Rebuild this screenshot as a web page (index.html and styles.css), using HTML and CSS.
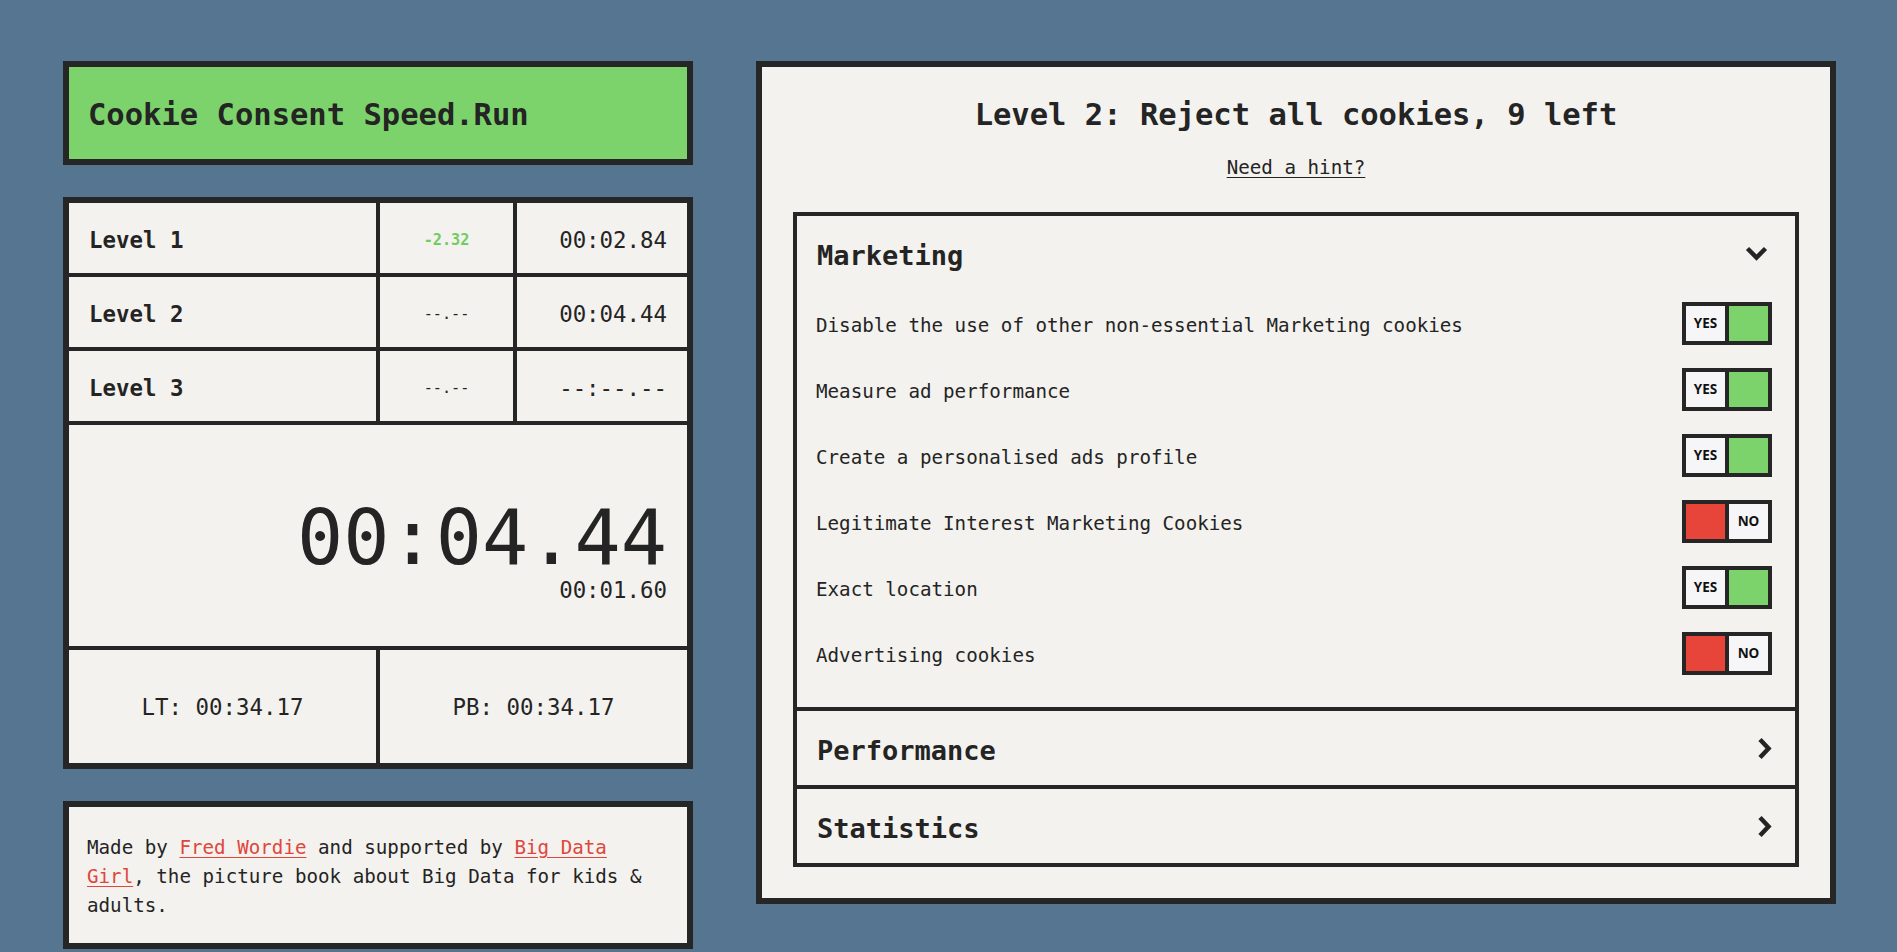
FILE: index.html
```html
<!DOCTYPE html>
<html lang="en">
<head>
  <meta charset="UTF-8">
  <meta name="viewport" content="width=device-width, initial-scale=1.0">
  <title>Cookie Consent Speed.Run</title>
  <link rel="stylesheet" href="styles.css">
</head>
<body>
  <main class="layout">
    <aside class="sidebar">
      <header class="brand">
        <h1>Cookie Consent Speed.Run</h1>
      </header>

      <section class="splits">
        <div class="cell level">Level 1</div>
        <div class="cell delta ahead">-2.32</div>
        <div class="cell split">00:02.84</div>

        <div class="cell level">Level 2</div>
        <div class="cell delta">--.--</div>
        <div class="cell split">00:04.44</div>

        <div class="cell level">Level 3</div>
        <div class="cell delta">--.--</div>
        <div class="cell split">--:--.--</div>

        <div class="cell timer">
          <div class="timer-main">00:04.44</div>
          <div class="timer-segment">00:01.60</div>
        </div>

        <div class="cell stat">LT: 00:34.17</div>
        <div class="cell stat pb">PB: 00:34.17</div>
      </section>

      <footer class="credits">
        <p>Made by <a href="#">Fred Wordie</a> and supported by <a href="#">Big Data Girl</a>, the picture book about Big Data for kids &amp; adults.</p>
      </footer>
    </aside>

    <section class="game">
      <h2>Level 2: Reject all cookies, 9 left</h2>
      <p class="hint"><a href="#">Need a hint?</a></p>

      <div class="accordion">
        <div class="category open">
          <div class="category-head">
            <h3>Marketing</h3>
            <svg class="chev" width="23" height="15" viewBox="0 0 23 15"><polyline points="2.5,2.5 11.5,11.5 20.5,2.5"/></svg>
          </div>
          <ul class="options">
            <li class="option">
              <span class="option-name">Disable the use of other non-essential Marketing cookies</span>
              <div class="toggle"><span class="label">YES</span><span class="on"></span></div>
            </li>
            <li class="option">
              <span class="option-name">Measure ad performance</span>
              <div class="toggle"><span class="label">YES</span><span class="on"></span></div>
            </li>
            <li class="option">
              <span class="option-name">Create a personalised ads profile</span>
              <div class="toggle"><span class="label">YES</span><span class="on"></span></div>
            </li>
            <li class="option">
              <span class="option-name">Legitimate Interest Marketing Cookies</span>
              <div class="toggle"><span class="off"></span><span class="label">NO</span></div>
            </li>
            <li class="option">
              <span class="option-name">Exact location</span>
              <div class="toggle"><span class="label">YES</span><span class="on"></span></div>
            </li>
            <li class="option">
              <span class="option-name">Advertising cookies</span>
              <div class="toggle"><span class="off"></span><span class="label">NO</span></div>
            </li>
          </ul>
        </div>

        <div class="category">
          <div class="category-head">
            <h3>Performance</h3>
            <svg class="chev" width="15" height="23" viewBox="0 0 15 23"><polyline points="3,2.5 11.5,11.5 3,20.5"/></svg>
          </div>
        </div>

        <div class="category">
          <div class="category-head">
            <h3>Statistics</h3>
            <svg class="chev" width="15" height="23" viewBox="0 0 15 23"><polyline points="3,2.5 11.5,11.5 3,20.5"/></svg>
          </div>
        </div>
      </div>
    </section>
  </main>
</body>
</html>
```

FILE: styles.css
```css
* { box-sizing: border-box; }
body {
  margin: 0;
  padding: 61px 61px 0 63px;
  background: #567590;
  color: #242424;
  font-family: "DejaVu Sans Mono", "Liberation Mono", monospace;
}
.layout {
  display: grid;
  grid-template-columns: 630px 1080px;
  column-gap: 63px;
  align-items: start;
}

/* left column */
.sidebar { display: flex; flex-direction: column; gap: 32px; }
.brand {
  height: 104px;
  display: flex; align-items: center;
  padding: 3px 19px 0;
  background: #7dd36b;
  border: 6px solid #262626;
}
.brand h1 { margin: 0; font-size: 30.5px; font-weight: 700; }

.splits {
  display: grid;
  grid-template-columns: 307px 133px 1fr;
  grid-template-rows: 70px 70px 70px 221px 113px;
  gap: 4px;
  background: #262626;
  border: 6px solid #262626;
}
.cell {
  display: flex; align-items: center;
  background: #f3f2ee;
  font-size: 22.4px;
}
.level { font-weight: 700; padding: 4px 0 0 20px; }
.delta { justify-content: center; padding-top: 4px; font-size: 15.2px; }
.delta.ahead { color: #6fcc5e; font-weight: 700; }
.split { justify-content: flex-end; padding: 4px 20px 0 0; }
.timer {
  grid-column: 1 / -1;
  flex-direction: column; align-items: flex-end;
  padding: 75px 20px 0;
}
.timer-main { font-size: 76.8px; line-height: 1; }
.timer-segment { font-size: 22.4px; line-height: 1.2; }
.stat { justify-content: center; }
.stat.pb { grid-column: 2 / -1; }

.credits {
  padding: 27px 18px 23px;
  background: #f3f2ee;
  border: 6px solid #262626;
  font-size: 19.2px; line-height: 1.5;
}
.credits p { margin: 0; }
.credits a { color: #e0463c; text-underline-offset: 3px; }

/* game panel */
.game {
  padding: 30px 31px 31px;
  background: #f3f2ee;
  border: 6px solid #262626;
  text-align: center;
}
.game h2 { margin: 0 0 20px; font-size: 30.5px; line-height: 1.2; }
.hint { margin: 0 0 30px; font-size: 19.2px; line-height: 1.5; }
.hint a { color: #242424; text-underline-offset: 3px; }

.accordion { border: 4px solid #262626; text-align: left; }
.category + .category { border-top: 4px solid #262626; }
.category-head {
  height: 74px;
  display: flex; align-items: center; justify-content: space-between;
  padding: 0 23px 0 20px;
}
.category-head h3 { margin: 0; padding-top: 4px; font-size: 27px; }
.chev { fill: none; stroke: #242424; stroke-width: 4.5; }
.open .chev { margin-right: 4px; }

.options { list-style: none; margin: 0; padding: 0 23px 21px 19px; }
.option {
  height: 66px;
  display: flex; align-items: center; justify-content: space-between;
  font-size: 19.2px;
}
.option-name { padding-top: 4px; }
.toggle {
  display: flex; gap: 4px;
  height: 43px;
  background: #262626;
  border: 4px solid #262626;
}
.toggle span { width: 39px; }
.toggle .label {
  display: flex; align-items: center; justify-content: center;
  background: #f6f6f9;
  font: 700 13.5px "Open Sans", sans-serif;
  color: #111;
}
.toggle .on { background: #7dd36b; }
.toggle .off { background: #e8453a; }
```
